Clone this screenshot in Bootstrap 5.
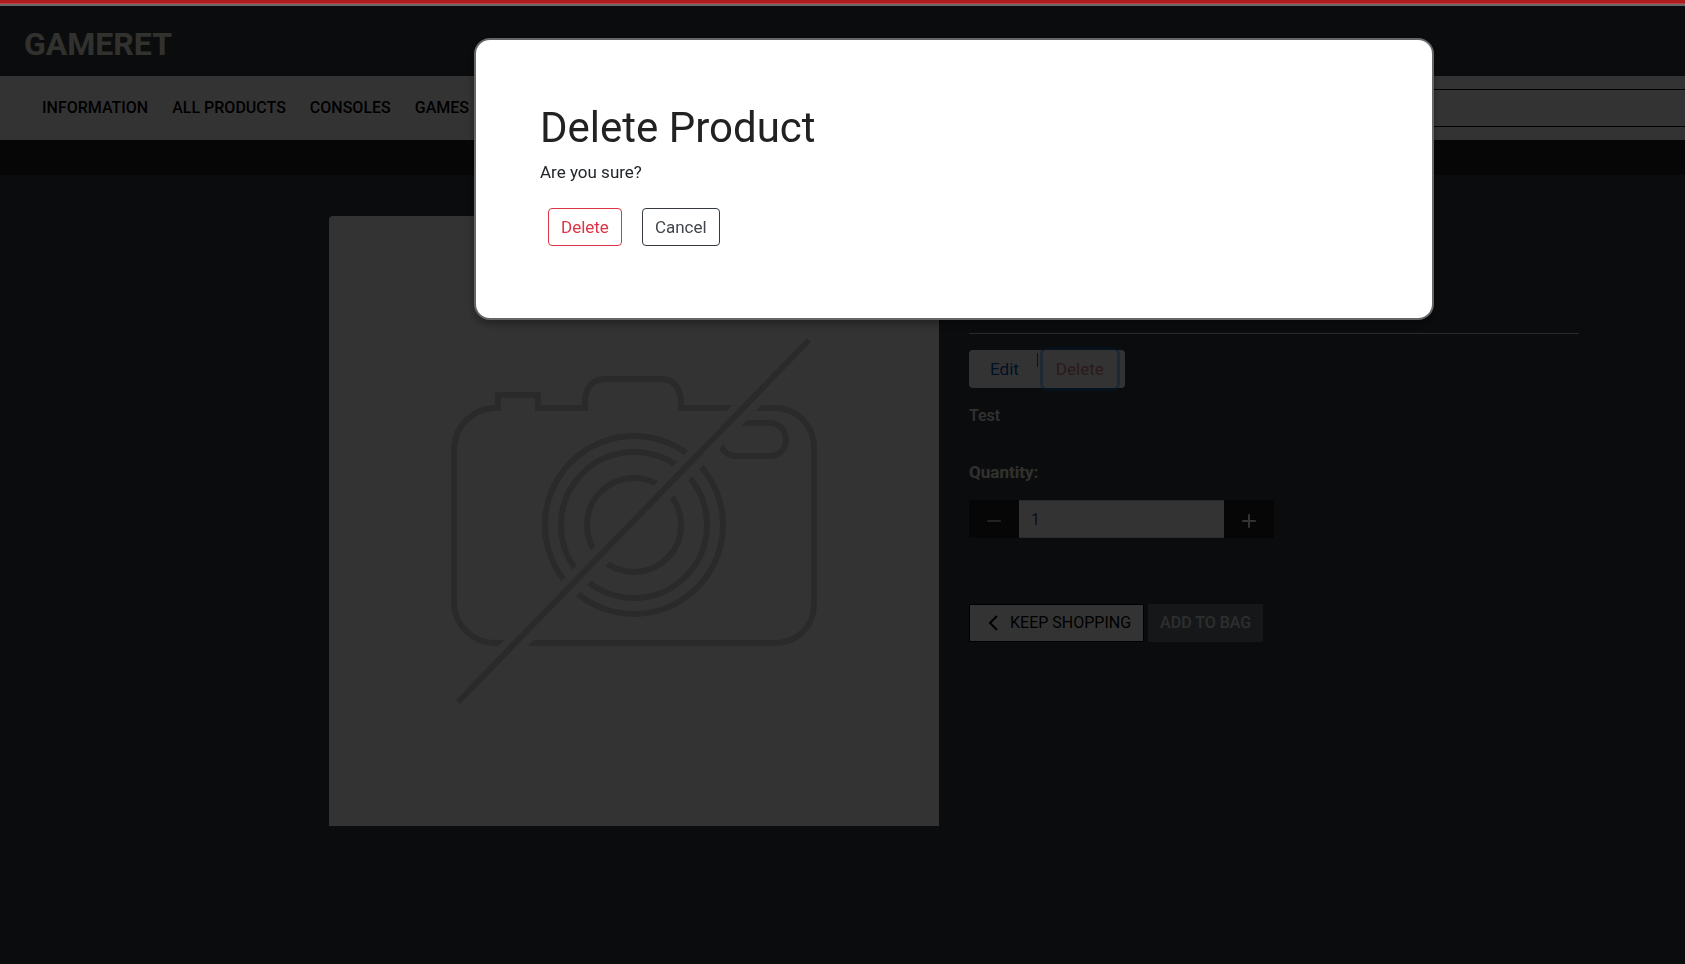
<!DOCTYPE html>
<html lang="en">
<head>
<meta charset="utf-8">
<meta name="viewport" content="width=device-width, initial-scale=1">
<title>Gameret - Test</title>
<link href="https://cdn.jsdelivr.net/npm/bootstrap@5.3.0/dist/css/bootstrap.min.css" rel="stylesheet">
<style>
  body { font-family: Roboto, Inter, sans-serif; font-size: 16px; line-height: 24px; background: #373c41; color: #f5f5eb; min-height: 100vh; }
  .btn { font-size: 17px; line-height: 24px; }
  .progress-line { position: relative; z-index: 1060; height: 6px; background: #6b6b6b; border-top: 3px solid #ad1d1e; }
  .progress-line::before { content: ""; display: block; height: 1px; background: #bd4040; }
  .site-head { height: 70px; padding: 6px 24px 0; }
  .brand { font-size: 32px; font-weight: 700; color: #f5f5e6; line-height: 40px; }
  .main-nav { height: 64px; padding-left: 30px; background: #fff; }
  .main-nav .nav-link { color: #000; font-weight: 500; padding: 8px 12px; font-size: 16px; }
  .search-box { width: 30%; height: 38px; border: solid #000; border-width: 1px 0; border-radius: 0; }
  .promo-strip { height: 35px; background: #202020; }
  .product-area { padding: 41px 5.4% 0 18.64%; }
  .product-area > .row { --bs-gutter-x: 30px; }
  .product-pic { background: #fff; border-radius: 4px 4px 0 0; }
  .details { padding-top: 117px; }
  .details hr { margin: 0 0 16px; border-top: 1px solid #fff; opacity: .8; }
  .blurb { font-weight: 500; }
  .qty-label { font-size: 17px; font-weight: 700; }
  .admin-links { background: #fff; border-radius: 4px; padding-right: 8px; }
  .admin-links .btn { border-radius: 4px; padding: 6px 12px; }
  .edit-link { color: #0055bb; margin-left: 8px; }
  .admin-links .sep { width: 1px; height: 14px; margin: 3px 5px 0; background: #55594f; }
  .admin-links .remove { color: #dc8088; box-shadow: 0 0 0 3px rgba(0,123,255,.4); }
  .qty { width: 305px; }
  .qty .btn { width: 50px; background: #202020; border: 0; border-radius: 0; padding: 0; }
  .qty .form-control { height: 38px; border: 1px solid #ced4da; color: #495057; border-radius: 0; font-size: 16px; }
  .actions { margin-top: 66px; gap: 4px; }
  .actions .btn { border-radius: 0; height: 38px; padding: 6px 12px; font-size: 16px; }
  .keep { background: #fff; color: #000; border: 1px solid #000; }
  .add { background: #6c757d; color: #e0e5e6; font-weight: 500; border: 0; }
  .veil { position: fixed; inset: 0; z-index: 1050; background: rgba(0,0,0,.8); }
  .confirm { margin: 38px 0 0 28.13%; max-width: 960px; padding: 64px; background: #fff; color: #212529; border: 2px solid #666; border-radius: 16px; box-shadow: 0 4px 8px rgba(0,0,0,.35); font-size: 17px; }
  .confirm h1 { font-size: 42px; line-height: 48px; font-weight: 400; color: #222; }
  .confirm .btn { margin: 8px; border-radius: 4px; padding: 6px 12px; }
  .confirm .btn-outline-dark { --bs-btn-color: #40464c; --bs-btn-border-color: #343a40; }
  .confirm form { gap: 4px; }
</style>
</head>
<body>
<div class="progress-line"></div>
<header>
  <div class="site-head d-flex align-items-center"><a class="brand text-decoration-none" href="#">GAMERET</a></div>
  <nav class="main-nav d-flex align-items-center">
    <ul class="nav flex-nowrap text-nowrap">
      <li class="nav-item"><a class="nav-link" href="#">INFORMATION</a></li>
      <li class="nav-item"><a class="nav-link" href="#">ALL PRODUCTS</a></li>
      <li class="nav-item"><a class="nav-link" href="#">CONSOLES</a></li>
      <li class="nav-item"><a class="nav-link" href="#">GAMES</a></li>
    </ul>
    <input class="search-box form-control ms-auto" type="search" aria-label="Search">
  </nav>
  <div class="promo-strip"></div>
</header>
<main class="product-area">
  <div class="row mx-0">
    <div class="col-6">
      <svg class="product-pic d-block w-100" viewBox="0 0 610 610" fill="none" stroke="#d0d0d0" stroke-width="6" role="img" aria-label="No image available">
        <path d="M169 192V179H209V192H256V184Q258 163 277 163H331Q350 163 352 184V192H446A39 39 0 0 1 485 231V390A38 38 0 0 1 447 427H166A41 41 0 0 1 125 388V231A42 42 0 0 1 165 192Z"/>
        <circle cx="305" cy="309" r="89"/><circle cx="305" cy="309" r="73"/><circle cx="305" cy="309" r="47"/>
        <rect x="391" y="207" width="66" height="33" rx="16"/>
        <path d="M125 491L485 120" stroke="#fff" stroke-width="21"/>
        <path d="M129 486L480 124"/>
      </svg>
    </div>
    <div class="col-6 details">
      <hr>
      <div class="admin-links d-inline-flex align-items-start">
        <a class="btn edit-link" href="#">Edit</a><span class="sep"></span><button class="btn remove" type="button">Delete</button>
      </div>
      <p class="blurb mt-3 mb-0">Test</p>
      <label class="qty-label d-block mt-4 pt-2" for="qty">Quantity:</label>
      <div class="qty input-group mt-3 flex-nowrap">
        <button class="btn" type="button" aria-label="Decrease"><svg width="16" height="16" stroke="#b0b0b0" stroke-width="2" stroke-linecap="round"><path d="M2 8H14"/></svg></button>
        <input class="form-control" id="qty" type="text" value="1">
        <button class="btn" type="button" aria-label="Increase"><svg width="16" height="16" stroke="#fff" stroke-width="2" stroke-linecap="round"><path d="M2 8H14M8 2V14"/></svg></button>
      </div>
      <div class="actions d-flex">
        <a class="keep btn d-flex align-items-center" href="#"><svg class="ms-1 me-2" width="16" height="16" fill="none" stroke="#000" stroke-width="2"><path d="M11 1L4 8L11 15"/></svg>KEEP SHOPPING</a>
        <button class="add btn" type="button">ADD TO BAG</button>
      </div>
    </div>
  </div>
</main>
<div class="veil">
  <div class="confirm" role="dialog" aria-modal="true" aria-labelledby="ask">
    <h1 class="mb-2" id="ask">Delete Product</h1>
    <p class="mb-3">Are you sure?</p>
    <form class="d-flex">
      <button class="btn btn-outline-danger" type="button">Delete</button>
      <button class="btn btn-outline-dark" type="button">Cancel</button>
    </form>
  </div>
</div>
<script src="https://cdn.jsdelivr.net/npm/bootstrap@5.3.0/dist/js/bootstrap.bundle.min.js"></script>
</body>
</html>
